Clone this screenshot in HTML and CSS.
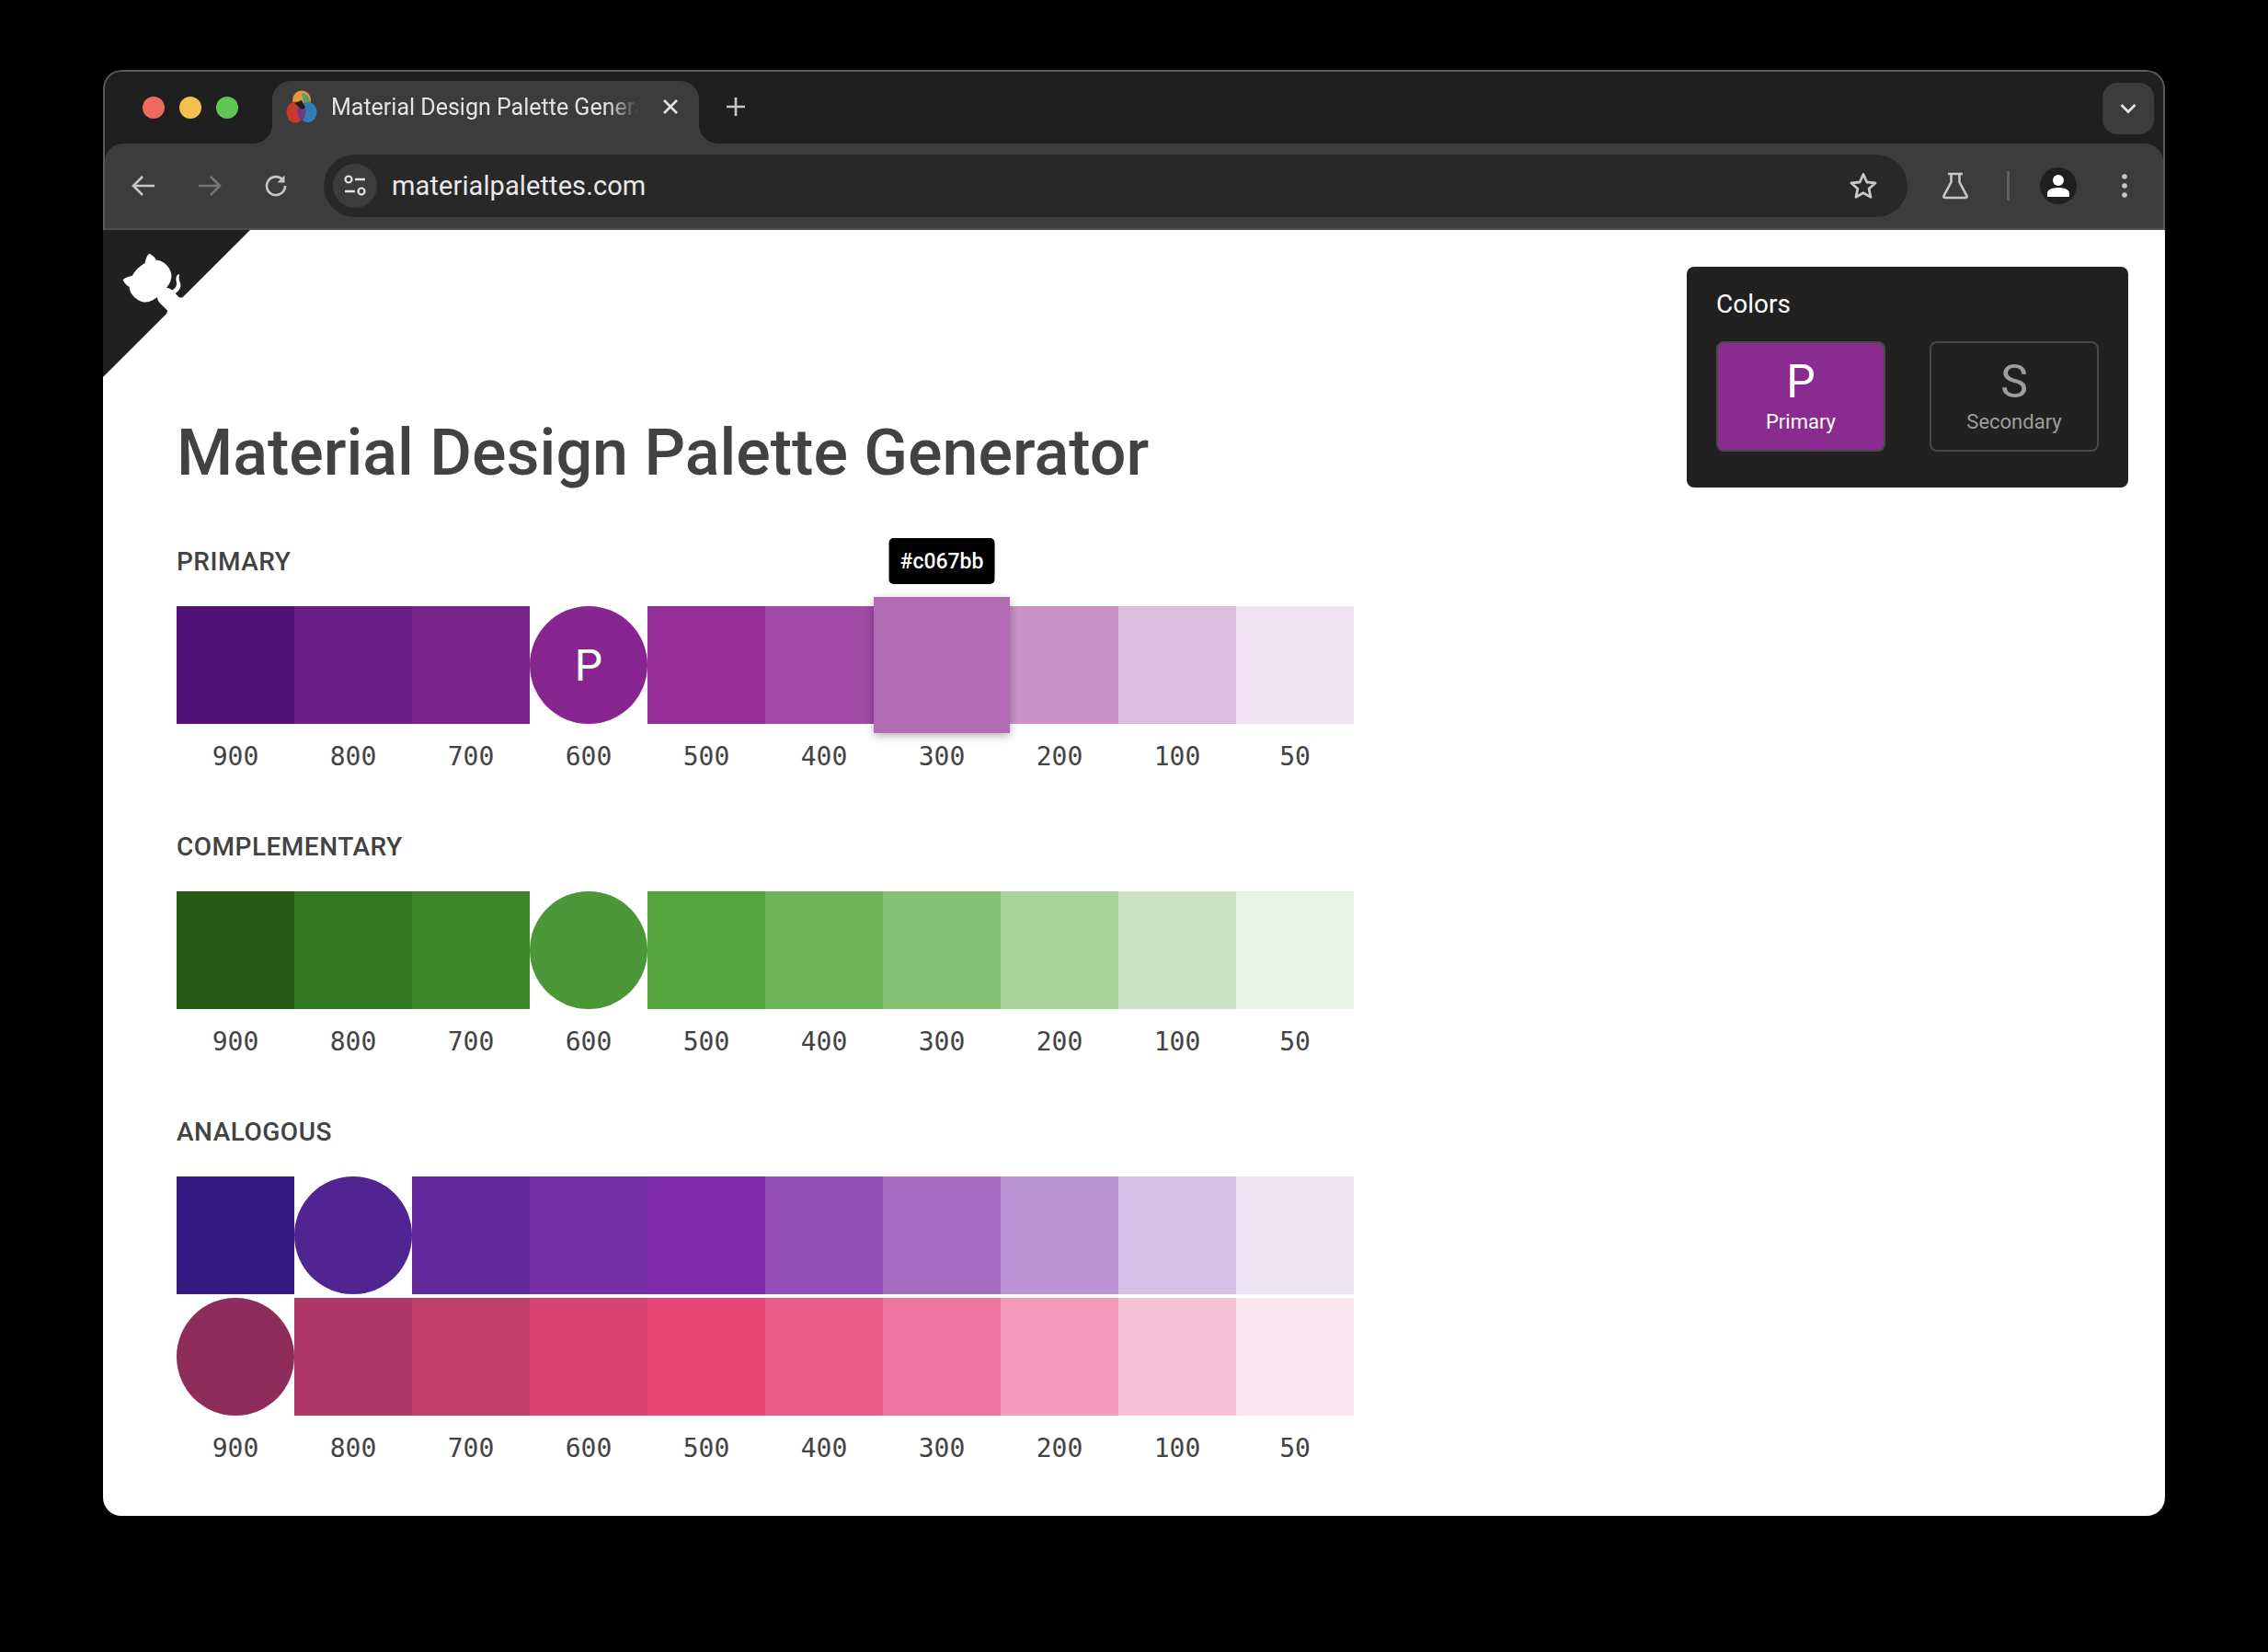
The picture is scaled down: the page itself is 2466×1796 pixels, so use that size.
FILE: index.html
```html
<!DOCTYPE html>
<html>
<head>
  <title>Material Design Palette Generator</title>
  <link rel="stylesheet" href="styles.css">
</head>
<body>
  <div class="window">
    <header class="chrome">
      <div class="titlebar">
        <div class="lights">
          <span class="light red"></span>
          <span class="light yellow"></span>
          <span class="light green"></span>
        </div>
        <div class="tab">
          <svg class="favicon" width="34" height="36" viewBox="0 0 34 36">
            <ellipse cx="17" cy="11" rx="10" ry="10.500" fill="#e29a3c"/>
            <path d="M17 3 a10 10 0 0 1 9 10 l-6 5 z" fill="#5c9a6c"/>
            <ellipse cx="10" cy="24" rx="9.500" ry="11.500" fill="#c8392b"/>
            <ellipse cx="24" cy="24" rx="9.500" ry="11" fill="#2f7fb5"/>
            <path d="M17 14 a9 11 0 0 1 0 19 a9 11 0 0 1 0 -19" fill="#6b3a8c"/>
            <path d="M9 14 l8 -3 l4 8 l-4 2 z" fill="#2a1a1a"/>
          </svg>
          <span class="tab-title">Material Design Palette Generator</span>
          <svg class="tab-close" width="18" height="18" viewBox="0 0 18 18">
            <path d="M2 2 L16 16 M16 2 L2 16" stroke="#e3e3e3" stroke-width="2.600"/>
          </svg>
        </div>
        <svg class="new-tab" width="22" height="22" viewBox="0 0 22 22">
          <path d="M11 1 V21 M1 11 H21" stroke="#c7c7c7" stroke-width="2.600"/>
        </svg>
        <div class="tab-search">
          <svg width="18" height="12" viewBox="0 0 18 12">
            <path d="M1.500 2 L9 9.500 L16.500 2" fill="none" stroke="#e3e3e3" stroke-width="2.800"/>
          </svg>
        </div>
      </div>
      <div class="toolbar">
        <svg class="nav-icon" width="26" height="24" viewBox="0 0 26 24">
          <path d="M25 12 H2 M12 2 L2 12 L12 22" fill="none" stroke="#c7c7c7" stroke-width="2.600"/>
        </svg>
        <svg class="nav-icon" width="26" height="24" viewBox="0 0 26 24">
          <path d="M1 12 H24 M14 2 L24 12 L14 22" fill="none" stroke="#757575" stroke-width="2.600"/>
        </svg>
        <svg class="nav-icon" width="26" height="26" viewBox="0 0 26 26">
          <path d="M20.500 6.500 A10 10 0 1 0 23 13" fill="none" stroke="#c7c7c7" stroke-width="2.600"/>
          <path d="M22.500 1.500 V9.500 H14.500 Z" fill="#c7c7c7"/>
        </svg>
        <div class="omnibox">
          <span class="site-icon">
            <svg width="26" height="24" viewBox="0 0 26 24">
              <circle cx="6" cy="5" r="3.500" fill="none" stroke="#e3e3e3" stroke-width="2.200"/>
              <path d="M13 5 H24 M2 18 H13" stroke="#e3e3e3" stroke-width="2.400"/>
              <circle cx="20" cy="18" r="3.500" fill="none" stroke="#e3e3e3" stroke-width="2.200"/>
            </svg>
          </span>
          <span class="url">materialpalettes.com</span>
          <svg class="star" width="32" height="32" viewBox="0 0 32 32">
            <path d="M16 3.500 L19.800 12 L29 13 L22.100 19.200 L24 28.300 L16 23.700 L8 28.300 L9.900 19.200 L3 13 L12.200 12 Z" fill="none" stroke="#c7c7c7" stroke-width="2.800" stroke-linejoin="round"/>
          </svg>
        </div>
        <svg class="flask" width="30" height="30" viewBox="0 0 30 30">
          <path d="M7 2 H23 M10.500 2 V11 L2.500 26 Q2 28 4 28 H26 Q28 28 27.500 26 L19.500 11 V2" fill="none" stroke="#c7c7c7" stroke-width="2.600"/>
        </svg>
        <span class="divider"></span>
        <span class="avatar">
          <svg width="26" height="26" viewBox="0 0 26 26">
            <circle cx="13" cy="7" r="6" fill="#fff"/>
            <path d="M1 25 V21 C1 17 7 15 13 15 C19 15 25 17 25 21 V25 Z" fill="#fff"/>
          </svg>
        </span>
        <svg class="menu" width="6" height="26" viewBox="0 0 6 26">
          <circle cx="3" cy="3" r="2.800" fill="#c7c7c7"/>
          <circle cx="3" cy="13" r="2.800" fill="#c7c7c7"/>
          <circle cx="3" cy="23" r="2.800" fill="#c7c7c7"/>
        </svg>
      </div>
    </header>

    <div class="page">
      <svg class="corner" width="160" height="160" viewBox="0 0 250 250">
        <path d="M0,0 L115,115 L130,115 L142,142 L250,250 L250,0 Z" fill="#212121"/>
        <path d="M128.3,109.0 C113.8,99.7 119.0,89.6 119.0,89.6 C122.0,82.7 120.5,78.6 120.5,78.6 C119.2,72.0 123.4,76.3 123.4,76.3 C127.3,80.9 125.5,87.3 125.5,87.3 C122.9,97.6 130.6,101.9 134.4,103.2" fill="#fff"/>
        <path d="M115.0,115.0 C114.9,115.1 118.7,116.5 119.8,115.4 L133.7,101.6 C136.9,99.2 139.9,98.4 142.2,98.6 C133.8,88.0 127.5,74.4 143.8,58.0 C148.5,53.4 154.0,51.2 159.7,51.0 C160.3,49.4 163.2,43.6 171.4,40.1 C171.4,40.1 176.1,42.5 178.8,56.2 C183.1,58.6 187.2,61.8 190.9,65.4 C194.5,69.0 197.7,73.2 200.1,77.6 C213.8,80.2 216.3,84.9 216.3,84.9 C212.7,93.1 206.9,96.0 205.4,96.6 C205.1,102.4 203.0,107.8 198.3,112.5 C181.9,128.9 168.3,122.5 157.7,114.1 C157.9,116.9 156.7,120.9 152.7,124.9 L141.0,136.5 C139.8,137.7 141.6,141.9 141.8,141.8 Z" fill="#fff"/>
      </svg>

      <main class="content">
        <h1>Material Design Palette Generator</h1>

        <h2>PRIMARY</h2>
        <div class="row">
          <div class="cell p900"></div>
          <div class="cell p800"></div>
          <div class="cell p700"></div>
          <div class="cell p600 round">P</div>
          <div class="cell p500"></div>
          <div class="cell p400"></div>
          <div class="cell hovered">
            <div class="lifted p300"></div>
            <span class="tooltip">#c067bb</span>
          </div>
          <div class="cell p200"></div>
          <div class="cell p100"></div>
          <div class="cell p50"></div>
        </div>
        <div class="numbers">
          <span>900</span><span>800</span><span>700</span><span>600</span><span>500</span><span>400</span><span>300</span><span>200</span><span>100</span><span>50</span>
        </div>

        <h2>COMPLEMENTARY</h2>
        <div class="row">
          <div class="cell c900"></div>
          <div class="cell c800"></div>
          <div class="cell c700"></div>
          <div class="cell c600 round"></div>
          <div class="cell c500"></div>
          <div class="cell c400"></div>
          <div class="cell c300"></div>
          <div class="cell c200"></div>
          <div class="cell c100"></div>
          <div class="cell c50"></div>
        </div>
        <div class="numbers">
          <span>900</span><span>800</span><span>700</span><span>600</span><span>500</span><span>400</span><span>300</span><span>200</span><span>100</span><span>50</span>
        </div>

        <h2>ANALOGOUS</h2>
        <div class="row stacked">
          <div class="cell a900"></div>
          <div class="cell a800 round"></div>
          <div class="cell a700"></div>
          <div class="cell a600"></div>
          <div class="cell a500"></div>
          <div class="cell a400"></div>
          <div class="cell a300"></div>
          <div class="cell a200"></div>
          <div class="cell a100"></div>
          <div class="cell a50"></div>
        </div>
        <div class="row">
          <div class="cell b900 round"></div>
          <div class="cell b800"></div>
          <div class="cell b700"></div>
          <div class="cell b600"></div>
          <div class="cell b500"></div>
          <div class="cell b400"></div>
          <div class="cell b300"></div>
          <div class="cell b200"></div>
          <div class="cell b100"></div>
          <div class="cell b50"></div>
        </div>
        <div class="numbers">
          <span>900</span><span>800</span><span>700</span><span>600</span><span>500</span><span>400</span><span>300</span><span>200</span><span>100</span><span>50</span>
        </div>
      </main>

      <aside class="panel">
        <div class="panel-title">Colors</div>
        <div class="panel-buttons">
          <div class="color-btn active">
            <span class="btn-letter">P</span>
            <span class="btn-label">Primary</span>
          </div>
          <div class="color-btn">
            <span class="btn-letter">S</span>
            <span class="btn-label">Secondary</span>
          </div>
        </div>
      </aside>
    </div>
  </div>
</body>
</html>
```

FILE: styles.css
```css
* {
  box-sizing: border-box;
}
body {
  margin: 0;
  padding: 76px 112px 148px;
  background: #000;
  font-family: Roboto, "Liberation Sans", sans-serif;
}
.window {
  width: 2242px;
  height: 1572px;
  border-radius: 20px;
  overflow: hidden;
  display: flex;
  flex-direction: column;
}

/* browser chrome */
.chrome {
  background: #1f1f1f;
  border: solid #5a5a5a;
  border-width: 2px 2px 0;
  border-radius: 20px 20px 0 0;
}
.titlebar {
  height: 78px;
  display: flex;
  align-items: flex-end;
  position: relative;
}
.lights {
  display: flex;
  gap: 16px;
  align-self: flex-start;
  margin: 27px 0 0 41px;
}
.light {
  width: 24px;
  height: 24px;
  border-radius: 50%;
}
.red { background: #ec6a5e; }
.yellow { background: #f4bf4f; }
.green { background: #61c554; }
.tab {
  width: 464px;
  height: 68px;
  margin-left: 37px;
  padding: 0 22px 12px 15px;
  display: flex;
  align-items: center;
  background: #3c3c3c;
  border-radius: 20px 20px 0 0;
  position: relative;
}
.tab::before,
.tab::after {
  content: "";
  position: absolute;
  bottom: 0;
  width: 20px;
  height: 20px;
}
.tab::before {
  left: -20px;
  background: radial-gradient(circle at 0 0, transparent 19.500px, #3c3c3c 20px);
}
.tab::after {
  right: -20px;
  background: radial-gradient(circle at 100% 0, transparent 19.500px, #3c3c3c 20px);
}
.favicon {
  flex: none;
}
.tab-title {
  flex: 1;
  margin-left: 15px;
  color: #e3e3e3;
  font-size: 25px;
  white-space: nowrap;
  overflow: hidden;
  -webkit-mask-image: linear-gradient(to right, #000 90%, transparent 100%);
  mask-image: linear-gradient(to right, #000 90%, transparent 100%);
}
.tab-close {
  flex: none;
  margin-left: 26px;
}
.new-tab {
  margin: 0 0 29px 29px;
}
.tab-search {
  margin: 0 10px 10px auto;
  width: 56px;
  height: 56px;
  border-radius: 16px;
  background: #3c3c3c;
  display: flex;
  align-items: center;
  justify-content: center;
}
.toolbar {
  height: 94px;
  background: #3c3c3c;
  border-radius: 20px 20px 0 0;
  border-bottom: 2px solid #4f4f4f;
  display: flex;
  align-items: center;
  padding-left: 29px;
  position: relative;
}
.nav-icon {
  flex: none;
  margin-right: 46px;
}
.omnibox {
  width: 1722px;
  height: 68px;
  margin-left: -7px;
  padding: 0 32px 0 10px;
  border-radius: 34px;
  background: #282828;
  display: flex;
  align-items: center;
}
.site-icon {
  width: 48px;
  height: 48px;
  border-radius: 50%;
  background: #3c3c3c;
  display: flex;
  align-items: center;
  justify-content: center;
}
.url {
  flex: 1;
  margin-left: 16px;
  color: #e8e8e8;
  font-size: 29px;
  letter-spacing: 0.1px;
}
.flask {
  margin-left: 37px;
}
.divider {
  width: 3px;
  height: 32px;
  margin-left: 41px;
  background: #5f5f5f;
}
.avatar {
  width: 40px;
  height: 40px;
  margin-left: 33px;
  border-radius: 50%;
  background: #1f1f1f;
  display: flex;
  align-items: center;
  justify-content: center;
  overflow: hidden;
}
.menu {
  margin-left: 49px;
}

/* page */
.page {
  flex: 1;
  background: #fff;
  display: flex;
  justify-content: space-between;
  align-items: flex-start;
  position: relative;
}
.corner {
  position: absolute;
  top: 0;
  left: 0;
  transform: scaleX(-1);
}
.content {
  padding: 202px 0 0 80px;
  color: #424242;
}
h1 {
  margin: 0 0 59px;
  font-size: 70px;
  font-weight: 500;
  line-height: 80px;
}
h2 {
  margin: 60px 0 28px;
  font-size: 28px;
  font-weight: 500;
  line-height: 40px;
  letter-spacing: 0.5px;
}
h1 + h2 {
  margin-top: 0;
}
.row {
  display: flex;
}
.row.stacked {
  margin-bottom: 4px;
}
.cell {
  width: 128px;
  height: 128px;
}
.round {
  border-radius: 50%;
  color: #fff;
  font-size: 48px;
  display: flex;
  align-items: center;
  justify-content: center;
}
.hovered {
  position: relative;
}
.lifted {
  height: 100%;
  transform: scale(1.156);
  box-shadow: 0 3px 8px rgba(0, 0, 0, 0.3);
}
.tooltip {
  position: absolute;
  left: 50%;
  bottom: calc(100% + 24px);
  transform: translateX(-50%);
  padding: 0 12px;
  height: 50px;
  line-height: 52px;
  border-radius: 5px;
  background: #000;
  color: #fff;
  font-size: 23px;
  font-weight: 500;
}
.numbers {
  display: flex;
  margin-top: 18px;
  font-family: "DejaVu Sans Mono", monospace;
  font-size: 28px;
  line-height: 36px;
}
.numbers span {
  width: 128px;
  text-align: center;
}

/* swatch colours */
.p900 { background: #4f1377; }
.p800 { background: #6a1d84; }
.p700 { background: #79238b; }
.p600 { background: #882691; }
.p500 { background: #942d98; }
.p400 { background: #a24aa5; }
.p300 { background: #b26bb5; }
.p200 { background: #c894c9; }
.p100 { background: #dcbede; }
.p50 { background: #f0e4f2; }
.c900 { background: #265a14; }
.c800 { background: #337621; }
.c700 { background: #3e862b; }
.c600 { background: #4b9637; }
.c500 { background: #55a53e; }
.c400 { background: #6db35a; }
.c300 { background: #88c277; }
.c200 { background: #a8d39b; }
.c100 { background: #cae3c3; }
.c50 { background: #e9f3e7; }
.a900 { background: #341a81; }
.a800 { background: #502591; }
.a700 { background: #642a9b; }
.a600 { background: #772fa5; }
.a500 { background: #7e2caa; }
.a400 { background: #9350b7; }
.a300 { background: #a56ec3; }
.a200 { background: #bc95d5; }
.a100 { background: #d7c0e6; }
.a50 { background: #ede5f4; }
.b900 { background: #8e2c5c; }
.b800 { background: #ae3768; }
.b700 { background: #c23e6a; }
.b600 { background: #d94373; }
.b500 { background: #ea4779; }
.b400 { background: #ea5c8a; }
.b300 { background: #ee75a0; }
.b200 { background: #f39bbb; }
.b100 { background: #f4c3d5; }
.b50 { background: #fae6ee; }

/* colors panel */
.panel {
  width: 480px;
  height: 240px;
  margin: 40px 40px 0 0;
  padding: 25px 32px;
  background: #212121;
  border-radius: 8px;
  color: #fff;
}
.panel-title {
  font-size: 28px;
  line-height: 32px;
  margin-bottom: 24px;
}
.panel-buttons {
  display: flex;
  gap: 48px;
}
.color-btn {
  width: 184px;
  height: 120px;
  border: 2px solid #484848;
  border-radius: 8px;
  color: #9e9e9e;
  display: flex;
  flex-direction: column;
  align-items: center;
  padding-top: 12px;
}
.color-btn.active {
  background: #8a2b92;
  color: #fff;
}
.btn-letter {
  font-size: 50px;
  line-height: 60px;
}
.btn-label {
  font-size: 22px;
  line-height: 28px;
}
```
